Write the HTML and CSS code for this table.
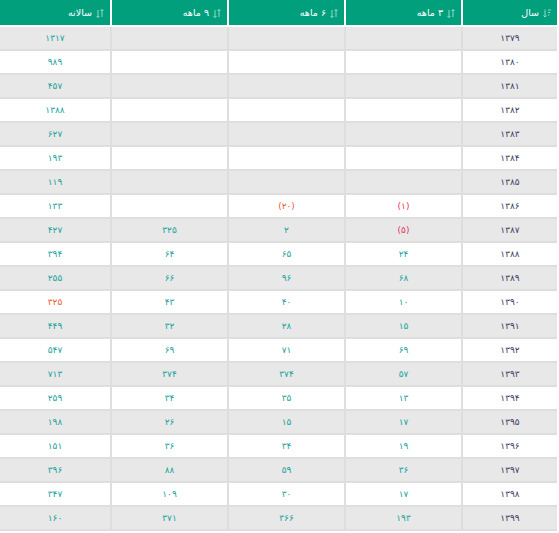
FILE: index.html
```html
<!DOCTYPE html>
<html lang="fa">
<head>
<meta charset="utf-8">
<link rel="stylesheet" href="styles.css">
</head>
<body>
<table class="grid" dir="rtl">
  <colgroup>
    <col class="c-year"><col class="c-q"><col class="c-q"><col class="c-q"><col class="c-annual">
  </colgroup>
  <thead>
    <tr>
      <th><span class="sort sorted"><svg width="8" height="9" viewBox="0 0 8 9"><path d="M2 0.5v7.5M0.5 6.5l1.5 1.5 1.5-1.5" stroke="#8fdcc6" stroke-width="1" fill="none"/><path d="M5 1h3M5 3.5h2.2M5 6h1.4" stroke="#8fdcc6" stroke-width="1"/></svg></span>سال</th>
      <th><span class="sort"><svg width="8" height="9" viewBox="0 0 8 9"><path d="M2 1v7.5M0.5 7l1.5 1.5 1.5-1.5M6 8V0.5M4.5 2L6 0.5 7.5 2" stroke="#8fdcc6" stroke-width="1" fill="none"/></svg></span>۳ ماهه</th>
      <th><span class="sort"><svg width="8" height="9" viewBox="0 0 8 9"><path d="M2 1v7.5M0.5 7l1.5 1.5 1.5-1.5M6 8V0.5M4.5 2L6 0.5 7.5 2" stroke="#8fdcc6" stroke-width="1" fill="none"/></svg></span>۶ ماهه</th>
      <th><span class="sort"><svg width="8" height="9" viewBox="0 0 8 9"><path d="M2 1v7.5M0.5 7l1.5 1.5 1.5-1.5M6 8V0.5M4.5 2L6 0.5 7.5 2" stroke="#8fdcc6" stroke-width="1" fill="none"/></svg></span>۹ ماهه</th>
      <th><span class="sort"><svg width="8" height="9" viewBox="0 0 8 9"><path d="M2 1v7.5M0.5 7l1.5 1.5 1.5-1.5M6 8V0.5M4.5 2L6 0.5 7.5 2" stroke="#8fdcc6" stroke-width="1" fill="none"/></svg></span>سالانه</th>
    </tr>
  </thead>
  <tbody>
    <tr><td class="yr">۱۳۷۹</td><td></td><td></td><td></td><td>۱۳۱۷</td></tr>
    <tr><td class="yr">۱۳۸۰</td><td></td><td></td><td></td><td>۹۸۹</td></tr>
    <tr><td class="yr">۱۳۸۱</td><td></td><td></td><td></td><td>۴۵۷</td></tr>
    <tr><td class="yr">۱۳۸۲</td><td></td><td></td><td></td><td>۱۳۸۸</td></tr>
    <tr><td class="yr">۱۳۸۳</td><td></td><td></td><td></td><td>۶۲۷</td></tr>
    <tr><td class="yr">۱۳۸۴</td><td></td><td></td><td></td><td>۱۹۳</td></tr>
    <tr><td class="yr">۱۳۸۵</td><td></td><td></td><td></td><td>۱۱۹</td></tr>
    <tr><td class="yr">۱۳۸۶</td><td class="neg">(۱)</td><td class="neg2">(۲۰)</td><td></td><td>۱۳۳</td></tr>
    <tr><td class="yr">۱۳۸۷</td><td class="neg">(۵)</td><td>۲</td><td>۳۲۵</td><td>۴۲۷</td></tr>
    <tr><td class="yr">۱۳۸۸</td><td>۲۴</td><td>۶۵</td><td>۶۴</td><td>۳۹۴</td></tr>
    <tr><td class="yr">۱۳۸۹</td><td>۶۸</td><td>۹۶</td><td>۶۶</td><td>۲۵۵</td></tr>
    <tr><td class="yr">۱۳۹۰</td><td>۱۰</td><td>۴۰</td><td>۴۳</td><td class="neg2">۳۲۵</td></tr>
    <tr><td class="yr">۱۳۹۱</td><td>۱۵</td><td>۲۸</td><td>۳۲</td><td>۴۴۹</td></tr>
    <tr><td class="yr">۱۳۹۲</td><td>۶۹</td><td>۷۱</td><td>۶۹</td><td>۵۴۷</td></tr>
    <tr><td class="yr">۱۳۹۳</td><td>۵۷</td><td>۳۷۴</td><td>۳۷۴</td><td>۷۱۳</td></tr>
    <tr><td class="yr">۱۳۹۴</td><td>۱۳</td><td>۳۵</td><td>۳۴</td><td>۲۵۹</td></tr>
    <tr><td class="yr">۱۳۹۵</td><td>۱۷</td><td>۱۵</td><td>۲۶</td><td>۱۹۸</td></tr>
    <tr><td class="yr">۱۳۹۶</td><td>۱۹</td><td>۳۴</td><td>۳۶</td><td>۱۵۱</td></tr>
    <tr><td class="yr">۱۳۹۷</td><td>۳۶</td><td>۵۹</td><td>۸۸</td><td>۳۹۶</td></tr>
    <tr><td class="yr">۱۳۹۸</td><td>۱۷</td><td>۳۰</td><td>۱۰۹</td><td>۳۴۷</td></tr>
    <tr><td class="yr">۱۳۹۹</td><td>۱۹۳</td><td>۳۶۶</td><td>۳۷۱</td><td>۱۶۰</td></tr>
  </tbody>
</table>
</body>
</html>
```
FILE: styles.css
```css
html, body {
  margin: 0;
  padding: 0;
  background: #fff;
}
body {
  font-family: "DejaVu Sans", "Noto Sans", sans-serif;
}
.grid {
  direction: rtl;
  width: 557px;
  border-collapse: separate;
  border-spacing: 0;
  table-layout: fixed;
  font-size: 9px;
}
.c-year { width: 96px; }
.c-q { width: 117px; }
.c-annual { width: 110px; }
.grid th {
  background: #029f7d;
  color: #fff;
  font-weight: normal;
  text-align: right;
  height: 25px;
  padding: 0 6px 0 0;
  border-bottom: 2px solid #fff;
  border-left: 2px solid #fff;
  box-sizing: border-box;
  vertical-align: middle;
  font-size: 9.5px;
  line-height: 25px;
}
.grid th:last-child,
.grid td:last-child {
  border-left: none;
}
.sort {
  display: inline-block;
  vertical-align: middle;
  margin-left: 4px;
  line-height: 0;
}
.grid td {
  height: 22px;
  padding: 0;
  text-align: center;
  vertical-align: middle;
  color: #17a39b;
  border-bottom: 2px solid #dedede;
  border-left: 2px solid #dedede;
}
.grid tbody tr:nth-child(odd) td {
  background: #e8e8e8;
}
.grid td.yr {
  color: #3e3d63;
}
.grid td.neg {
  color: #e8345a;
}
.grid td.neg2 {
  color: #ee5a2a;
}
```
